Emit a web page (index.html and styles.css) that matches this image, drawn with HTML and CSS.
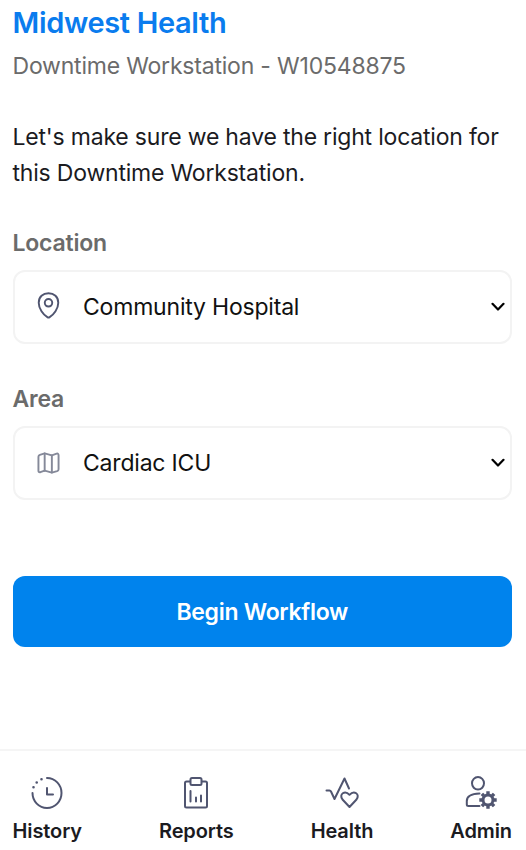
FILE: index.html
```html
<!DOCTYPE html>
<html lang="en">
<head>
    <meta charset="UTF-8">
    <title>Midwest Health</title>
    <link rel="stylesheet" href="styles.css">
</head>
<body>
    <main class="container">
        <h1>Midwest Health</h1>
        <p class="workstation">Downtime Workstation - W10548875</p>
        <p class="intro">Let's make sure we have the right location for this Downtime Workstation.</p>

        <form>
            <label for="location">Location</label>
            <div class="field">
                <svg class="field-icon pin" width="23" height="27" viewBox="0 0 24 28">
                    <path d="M12 1.2C6.200 1.200 1.800 5.100 1.800 11.100C1.800 17.200 6.500 23.600 10.800 26.100C11.600 26.600 12.400 26.600 13.200 26.100C17.500 23.600 22.200 17.200 22.200 11.100C22.200 5.100 17.800 1.200 12 1.200Z"/>
                    <circle cx="12" cy="11.200" r="3.900"/>
                </svg>
                <select id="location">
                    <option>Community Hospital</option>
                </select>
                <svg class="arrow" width="14" height="10" viewBox="0 0 14 10"><path d="M1.500 1.800L7 7.500L12.500 1.800"/></svg>
            </div>

            <label for="area">Area</label>
            <div class="field">
                <svg class="field-icon map" width="23" height="22" viewBox="0 0 24 22">
                    <path d="M1.500 4.500Q1.500 3 3 2.500L8 1L15.500 3L20.500 1.200Q22.500 .8 22.500 3V17.500Q22.500 19 21 19.500L15.500 21L8 19L3.500 20.600Q1.500 21 1.500 19Z"/>
                    <path d="M8 1V19M15.500 3V21"/>
                </svg>
                <select id="area">
                    <option>Cardiac ICU</option>
                </select>
                <svg class="arrow" width="14" height="10" viewBox="0 0 14 10"><path d="M1.500 1.800L7 7.500L12.500 1.800"/></svg>
            </div>

            <button type="button" class="button">Begin Workflow</button>
        </form>
    </main>

    <nav class="navbar">
        <a href="#" class="nav-item">
            <svg width="32" height="34" viewBox="0 0 32 34">
                <path d="M16 2A14.500 15 0 1 1 1.500 17M16 12V18.500H22"/>
                <path class="dots" d="M2.500 11.300h.01M5.700 6.500h.01M10.500 3.200h.01"/>
            </svg>
            History
        </a>
        <a href="#" class="nav-item">
            <svg width="32" height="34" viewBox="0 0 32 34">
                <path d="M10 5.500H6.500Q5 5.500 5 7V30Q5 31.500 6.500 31.500H25.500Q27 31.500 27 30V7Q27 5.500 25.500 5.500H22"/>
                <rect x="10.500" y="2" width="11" height="7" rx="1.500"/>
                <path d="M10.500 15V25.500M16 21.500V25.500M21 19.500V25.500"/>
            </svg>
            Reports
        </a>
        <a href="#" class="nav-item">
            <svg width="34" height="34" viewBox="0 0 34 34">
                <path d="M1.500 14.500H4.500Q5.500 14.500 6 15.500L9.500 23L19.500 2.500L24 12.500"/>
                <path d="M24.500 31L17.500 23.500C13.500 18 20 13.800 24.500 18.800C29 13.800 35.500 18 31.500 23.500Z"/>
            </svg>
            Health
        </a>
        <a href="#" class="nav-item">
            <svg width="32" height="34" viewBox="0 0 32 34">
                <ellipse cx="13" cy="7.300" rx="6" ry="6.300"/>
                <path d="M14.500 17.500Q1.800 18 1.800 25V28.500Q1.800 30 3.500 30H14.500"/>
                <circle class="gear" cx="23" cy="24" r="5"/>
                <path class="teeth" d="M23 18V15.300M23 30V32.700M17 24H14.300M29 24H31.700M18.800 19.800L16.900 17.900M27.200 19.800L29.100 17.900M18.800 28.200L16.900 30.100M27.200 28.200L29.100 30.100"/>
            </svg>
            Admin
        </a>
    </nav>
</body>
</html>
```
FILE: styles.css
```css
* {
    box-sizing: border-box;
}
body {
    margin: 0;
    height: 850px;
    display: flex;
    flex-direction: column;
    overflow: hidden;
    font-family: Inter, sans-serif;
    color: #1b1b1f;
    background-color: #fff;
}
.container {
    flex: 1;
    padding: 5px 14px 0 12.5px;
}
h1 {
    margin: 0;
    font-size: 29px;
    font-weight: 600;
    line-height: 36px;
    letter-spacing: -0.35px;
    color: #0a7cee;
}
p {
    margin: 0;
    font-size: 23px;
    line-height: 36px;
    letter-spacing: -0.2px;
}
.workstation {
    margin-top: 7px;
    color: #6b6b6b;
}
.intro {
    margin-top: 35px;
}
label {
    display: block;
    margin: 36px 0 11px;
    font-size: 23px;
    font-weight: 600;
    line-height: 32px;
    letter-spacing: -0.2px;
    color: #6b6b6b;
}
.field {
    display: flex;
    align-items: center;
    height: 74px;
    margin-bottom: 39px;
    padding: 0 5px 0 22.5px;
    border: 2px solid #f3f3f3;
    border-radius: 12px;
}
svg {
    flex: none;
    fill: none;
    stroke: #505570;
    stroke-width: 2;
    stroke-linecap: round;
    stroke-linejoin: round;
}
.pin {
    margin-bottom: 3px;
}
.map {
    stroke: #858999;
}
.field .arrow {
    margin-bottom: 1px;
    stroke: #000;
    stroke-width: 2.200;
}
select {
    flex: 1;
    height: 70px;
    margin-left: 23px;
    padding: 0;
    appearance: none;
    border: none;
    background: none;
    font-family: inherit;
    font-size: 23px;
    letter-spacing: -0.2px;
    color: #111;
}
.button {
    width: 100%;
    height: 71px;
    margin-top: 37px;
    border: none;
    border-radius: 12px;
    background-color: #0083ed;
    color: #fff;
    font-family: inherit;
    font-size: 23px;
    font-weight: 600;
    letter-spacing: -0.3px;
}
.navbar {
    display: flex;
    justify-content: space-between;
    height: 101px;
    padding: 25px 14px 0 12.5px;
    border-top: 2px solid #f5f5f5;
}
.nav-item {
    display: flex;
    flex-direction: column;
    align-items: center;
    font-size: 20px;
    font-weight: 600;
    line-height: 24px;
    letter-spacing: -0.1px;
    gap: 9px;
    color: #1b1b1f;
    text-decoration: none;
}
.dots {
    stroke-width: 2.600;
}
.gear {
    stroke-width: 3;
}
.teeth {
    stroke-width: 3.400;
    stroke-linecap: butt;
}
```
